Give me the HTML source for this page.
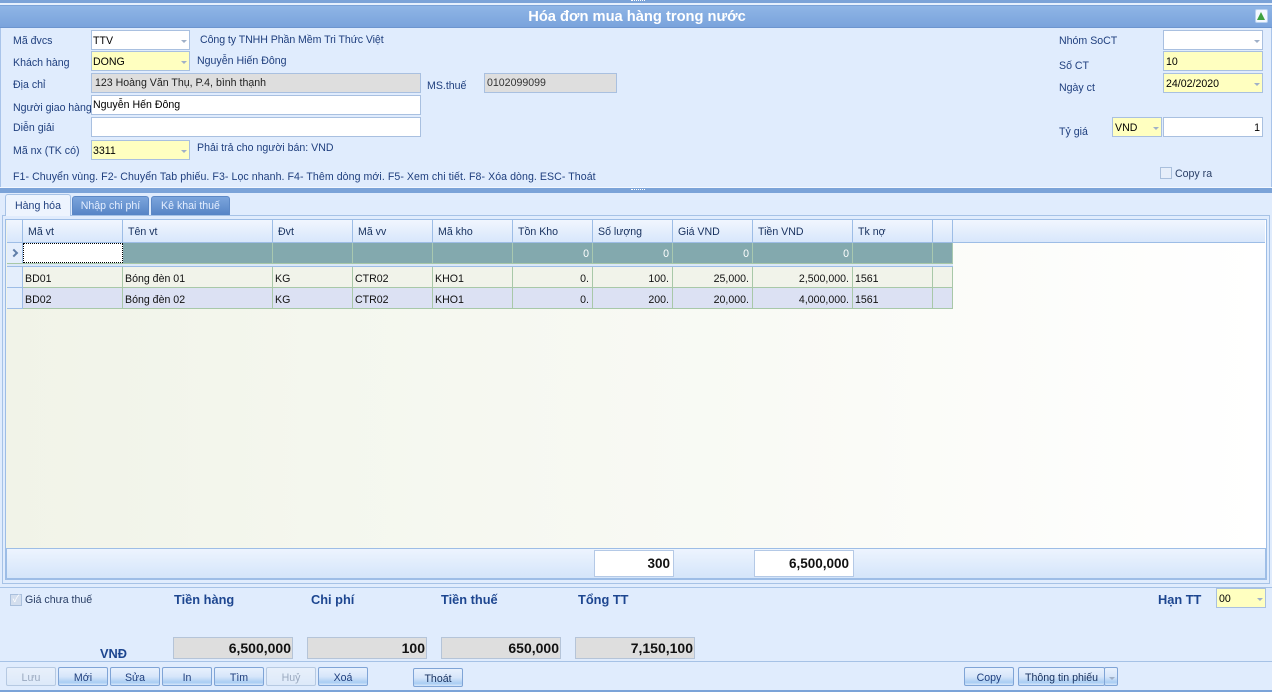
<!DOCTYPE html>
<html><head><meta charset="utf-8">
<style>
html,body{margin:0;padding:0}
body{width:1272px;height:692px;overflow:hidden;position:relative;background:#e0ecfd;font:10.6px "Liberation Sans","Noto Sans CJK SC",sans-serif;color:#1e3f7c}
div{position:absolute;box-sizing:border-box;white-space:nowrap}
.l{height:16px;line-height:16px;color:#1f3f7e}
.f{border:1px solid #a9c0e0;background:#fff;color:#000;line-height:21px;padding-left:1px;height:20px}
.y{background:#ffffc0}
.g{background:#dedede}
.ar:after{content:"";position:absolute;right:2px;top:9px;border:3px solid transparent;border-top:3px solid #9fb0c8;border-bottom:0}
.hc{top:220px;height:23px;background:linear-gradient(#f1f6fe,#d8e7fb);border-right:1px solid #9dbde6;border-bottom:1px solid #9dbde6;line-height:25px;padding-left:5px;color:#16305e}
.c{height:21px;line-height:24px;border-right:1px solid #a8c8a8;border-bottom:1px solid #a8c8a8;padding:0 3px 0 2px;color:#111}
.n{text-align:right}
.nr{top:243px;height:20px;background:#83a9ae;color:#fff;line-height:22px;border-right:1px solid #a8c8b0;padding:0 3px}
.b{top:667px;height:19px;width:50px;border:1px solid #7fa4d6;border-radius:2px;background:linear-gradient(#e8f1fd 0,#d7e6fa 50%,#a9cdf3 85%,#d8e8fb 100%);text-align:center;line-height:20px;color:#1f3f7e}
.d{border-color:#b6c9e2;background:linear-gradient(#e8f0fb,#dde9f9);color:#9aa9bf}
.t{font-weight:bold;font-size:12.8px;color:#1d4690;height:16px;line-height:16px}
.s{top:637px;height:22px;background:#dedede;border:1px solid #b5c4d8;text-align:right;font-weight:bold;font-size:14px;color:#111;line-height:21px;padding-right:1px}
</style></head><body>

<div style="left:0;top:0;width:1272px;height:3px;background:#7ba3d8"></div>
<div style="left:0;top:3px;width:1272px;height:2px;background:#e6f0fd"></div>
<div style="left:0;top:5px;width:1272px;height:1px;background:#7ba3d8"></div>
<div style="left:0;top:6px;width:1272px;height:22px;background:linear-gradient(#8fb5e6,#7aa3dc);border-bottom:1px solid #6c95cf;text-align:center;color:#fff;font-weight:bold;font-size:14.7px;line-height:23px;padding-left:2px">Hóa đơn mua hàng trong nước</div>
<div style="left:1255px;top:9px;width:13px;height:14px;background:#f3f8ff;border:1px solid #b8d0ef;border-radius:2px"><div style="left:1px;top:2px;width:0;height:0;border:4.5px solid transparent;border-top:0;border-bottom:8px solid #3fa23f"></div></div>
<div style="left:0;top:28px;width:1px;height:159px;background:#a9c4ea"></div>
<div style="left:1271px;top:28px;width:1px;height:159px;background:#a9c4ea"></div>

<div class="l" style="left:13px;top:33px">Mã đvcs</div>
<div class="f ar" style="left:91px;top:30px;width:99px">TTV</div>
<div class="l" style="left:200px;top:32px;letter-spacing:-.07px">Công ty TNHH Phần Mềm Tri Thức Việt</div>
<div class="l" style="left:13px;top:55px">Khách hàng</div>
<div class="f y ar" style="left:91px;top:51px;width:99px">DONG</div>
<div class="l" style="left:197px;top:53px">Nguyễn Hiến Đông</div>
<div class="l" style="left:13px;top:77px">Địa chỉ</div>
<div class="f g" style="left:91px;top:73px;width:330px;padding-left:3px;color:#222;line-height:19px">123 Hoàng Văn Thụ, P.4, bình thạnh</div>
<div class="l" style="left:427px;top:78px">MS.thuế</div>
<div class="f g" style="left:484px;top:73px;width:133px;padding-left:2px;color:#333;line-height:19px">0102099099</div>
<div class="l" style="left:13px;top:100px;letter-spacing:-.05px">Người giao hàng</div>
<div class="f" style="left:91px;top:95px;width:330px;line-height:19px">Nguyễn Hến Đông</div>
<div class="l" style="left:13px;top:120px">Diễn giải</div>
<div class="f" style="left:91px;top:117px;width:330px"></div>
<div class="l" style="left:13px;top:143px">Mã nx (TK có)</div>
<div class="f y ar" style="left:91px;top:140px;width:99px">3311</div>
<div class="l" style="left:197px;top:140px">Phải trả cho người bán: VND</div>
<div class="l" style="left:13px;top:169px;letter-spacing:.06px">F1- Chuyển vùng. F2- Chuyển Tab phiếu. F3- Lọc nhanh. F4- Thêm dòng mới. F5- Xem chi tiết. F8- Xóa dòng. ESC- Thoát</div>

<div class="l" style="left:1059px;top:33px">Nhóm SoCT</div>
<div class="f ar" style="left:1163px;top:30px;width:100px"></div>
<div class="l" style="left:1059px;top:58px">Số CT</div>
<div class="f y" style="left:1163px;top:51px;width:100px;padding-left:2px">10</div>
<div class="l" style="left:1059px;top:80px">Ngày ct</div>
<div class="f y ar" style="left:1163px;top:73px;width:100px;padding-left:2px">24/02/2020</div>
<div class="l" style="left:1059px;top:124px">Tỷ giá</div>
<div class="f y ar" style="left:1112px;top:117px;width:50px;padding-left:2px">VND</div>
<div class="f" style="left:1163px;top:117px;width:100px;text-align:right;padding-right:2px">1</div>
<div style="left:1160px;top:167px;width:12px;height:12px;border:1px solid #a9bfdc;background:#e6eefa"></div>
<div class="l" style="left:1175px;top:166px;color:#2a3f66">Copy ra</div>

<div style="left:0;top:187px;width:1272px;height:1px;background:#f2f7ff"></div>
<div style="left:0;top:188px;width:1272px;height:5px;background:#7ba3d8"></div>
<div style="left:631px;top:189px;width:14px;height:1px;border-top:1px dotted #fff"></div>
<div style="left:631px;top:0;width:14px;height:1px;border-top:1px dotted #fff"></div>

<!-- tabs -->
<div style="left:2px;top:215px;width:1268px;height:369px;border:1px solid #a6c2e6;background:#e0ecfd"></div>
<div style="left:5px;top:194px;width:66px;height:22px;background:#edf4fe;border:1px solid #a6c2e6;border-bottom:0;border-radius:3px 3px 0 0;text-align:center;line-height:22px;color:#1f3f7e">Hàng hóa</div>
<div style="left:72px;top:196px;width:77px;height:19px;background:linear-gradient(#7ba5dc,#5684c6);border:1px solid #5c88c6;border-bottom:0;border-radius:3px 3px 0 0;text-align:center;line-height:18px;color:#e4eeff">Nhập chi phí</div>
<div style="left:151px;top:196px;width:79px;height:19px;background:linear-gradient(#7ba5dc,#5684c6);border:1px solid #5c88c6;border-bottom:0;border-radius:3px 3px 0 0;text-align:center;line-height:18px;color:#e4eeff">Kê khai thuế</div>

<!-- grid -->
<div style="left:5px;top:219px;width:1262px;height:361px;border:1px solid #9dbde6;background:linear-gradient(90deg,#f1f3e8,#f4f7ee 25%,#f9faf5 60%,#fff 100%)"></div>

<div class="hc" style="left:7px;width:16px;padding:0"></div>
<div class="hc" style="left:23px;width:100px">Mã vt</div>
<div class="hc" style="left:123px;width:150px">Tên vt</div>
<div class="hc" style="left:273px;width:80px">Đvt</div>
<div class="hc" style="left:353px;width:80px">Mã vv</div>
<div class="hc" style="left:433px;width:80px">Mã kho</div>
<div class="hc" style="left:513px;width:80px">Tồn Kho</div>
<div class="hc" style="left:593px;width:80px">Số lượng</div>
<div class="hc" style="left:673px;width:80px">Giá VND</div>
<div class="hc" style="left:753px;width:100px">Tiền VND</div>
<div class="hc" style="left:853px;width:80px">Tk nợ</div>
<div class="hc" style="left:933px;width:20px"></div>
<div class="hc" style="left:953px;width:312px;border-right:0"></div>

<div style="left:7px;top:243px;width:16px;height:20px;background:#e4eefc;border-right:1px solid #9dbde6"><div style="left:4px;top:7px;width:6px;height:6px;border-top:2px solid #5f7ea8;border-right:2px solid #5f7ea8;transform:rotate(45deg)"></div></div>
<div style="left:23px;top:243px;width:100px;height:20px;background:#fff;border:1px dotted #000"></div>
<div class="nr" style="left:123px;width:150px"></div>
<div class="nr" style="left:273px;width:80px"></div>
<div class="nr" style="left:353px;width:80px"></div>
<div class="nr" style="left:433px;width:80px"></div>
<div class="nr n" style="left:513px;width:80px">0</div>
<div class="nr n" style="left:593px;width:80px">0</div>
<div class="nr n" style="left:673px;width:80px">0</div>
<div class="nr n" style="left:753px;width:100px">0</div>
<div class="nr" style="left:853px;width:80px"></div>
<div class="nr" style="left:933px;width:20px"></div>
<div style="left:7px;top:263px;width:946px;height:4px;background:#dbe8f8;border-top:1px solid #a8c8a8;border-bottom:1px solid #9dbde6"></div>

<div class="c" style="left:7px;top:267px;width:16px;background:#e4eefc;border-color:#9dbde6"></div>
<div class="c" style="left:23px;top:267px;width:100px;background:#f1f3ea">BD01</div>
<div class="c" style="left:123px;top:267px;width:150px;background:#f1f3ea">Bóng đèn 01</div>
<div class="c" style="left:273px;top:267px;width:80px;background:#f1f3ea">KG</div>
<div class="c" style="left:353px;top:267px;width:80px;background:#f1f3ea">CTR02</div>
<div class="c" style="left:433px;top:267px;width:80px;background:#f1f3ea">KHO1</div>
<div class="c n" style="left:513px;top:267px;width:80px;background:#f1f3ea">0.</div>
<div class="c n" style="left:593px;top:267px;width:80px;background:#f1f3ea">100.</div>
<div class="c n" style="left:673px;top:267px;width:80px;background:#f1f3ea">25,000.</div>
<div class="c n" style="left:753px;top:267px;width:100px;background:#f1f3ea">2,500,000.</div>
<div class="c" style="left:853px;top:267px;width:80px;background:#f1f3ea">1561</div>
<div class="c" style="left:933px;top:267px;width:20px;background:#f1f3ea"></div>

<div class="c" style="left:7px;top:288px;width:16px;background:#e4eefc;border-color:#9dbde6"></div>
<div class="c" style="left:23px;top:288px;width:100px;background:#dce1f3">BD02</div>
<div class="c" style="left:123px;top:288px;width:150px;background:#dce1f3">Bóng đèn 02</div>
<div class="c" style="left:273px;top:288px;width:80px;background:#dce1f3">KG</div>
<div class="c" style="left:353px;top:288px;width:80px;background:#dce1f3">CTR02</div>
<div class="c" style="left:433px;top:288px;width:80px;background:#dce1f3">KHO1</div>
<div class="c n" style="left:513px;top:288px;width:80px;background:#dce1f3">0.</div>
<div class="c n" style="left:593px;top:288px;width:80px;background:#dce1f3">200.</div>
<div class="c n" style="left:673px;top:288px;width:80px;background:#dce1f3">20,000.</div>
<div class="c n" style="left:753px;top:288px;width:100px;background:#dce1f3">4,000,000.</div>
<div class="c" style="left:853px;top:288px;width:80px;background:#dce1f3">1561</div>
<div class="c" style="left:933px;top:288px;width:20px;background:#dce1f3"></div>

<!-- grid footer -->
<div style="left:6px;top:548px;width:1260px;height:31px;background:linear-gradient(#edf4fe,#d4e5fa);border:1px solid #9dbde6"></div>
<div style="left:594px;top:550px;width:80px;height:27px;background:#fff;border:1px solid #b4c9e6;text-align:right;padding-right:3px;font-size:13.5px;font-weight:bold;line-height:25px;color:#111">300</div>
<div style="left:754px;top:550px;width:100px;height:27px;background:#fff;border:1px solid #b4c9e6;text-align:right;padding-right:4px;font-size:13.5px;font-weight:bold;line-height:25px;color:#111">6,500,000</div>

<!-- bottom panel -->
<div style="left:0;top:587px;width:1272px;height:1px;background:#a6c2e6"></div>
<div style="left:10px;top:594px;width:12px;height:12px;border:1px solid #a9bfdc;background:#d3deee;color:#fff;font-size:10px;line-height:10px;text-align:center">✓</div>
<div class="l" style="left:25px;top:592px;color:#2a3f66">Giá chưa thuế</div>
<div class="t" style="left:174px;top:592px">Tiền hàng</div>
<div class="t" style="left:311px;top:592px">Chi phí</div>
<div class="t" style="left:441px;top:592px">Tiền thuế</div>
<div class="t" style="left:578px;top:592px">Tổng TT</div>
<div class="t" style="left:1158px;top:592px">Hạn TT</div>
<div class="f y ar" style="left:1216px;top:588px;width:50px;padding-left:2px">00</div>
<div class="t" style="left:100px;top:646px">VNĐ</div>
<div class="s" style="left:173px;width:120px">6,500,000</div>
<div class="s" style="left:307px;width:120px">100</div>
<div class="s" style="left:441px;width:120px">650,000</div>
<div class="s" style="left:575px;width:120px">7,150,100</div>
<div style="left:0;top:661px;width:1272px;height:1px;background:#a6c2e6"></div>

<div class="b d" style="left:6px">Lưu</div>
<div class="b" style="left:58px">Mới</div>
<div class="b" style="left:110px">Sửa</div>
<div class="b" style="left:162px">In</div>
<div class="b" style="left:214px">Tìm</div>
<div class="b d" style="left:266px">Huỷ</div>
<div class="b" style="left:318px">Xoá</div>
<div class="b" style="left:413px;top:668px;color:#16305e">Thoát</div>
<div class="b" style="left:964px">Copy</div>
<div class="b" style="left:1018px;width:87px;color:#16305e">Thông tin phiếu</div>
<div class="b ar" style="left:1104px;width:14px"></div>
<div style="left:0;top:690px;width:1272px;height:2px;background:#7ba3d8"></div>
</body></html>
